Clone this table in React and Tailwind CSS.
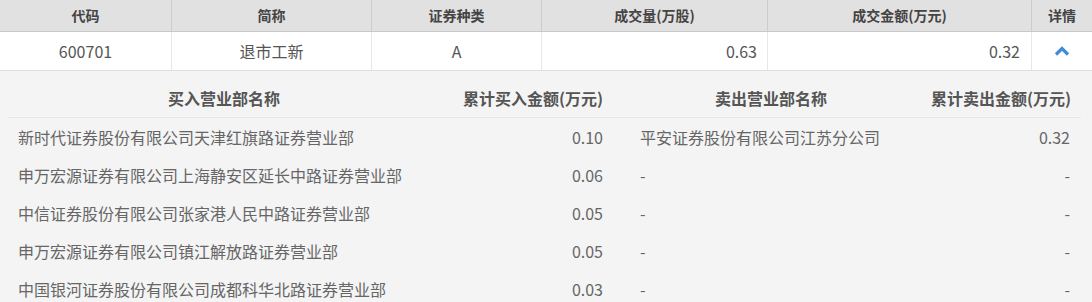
import React from 'react';

const COLS = [
    { key: 'code', label: '代码', w: 'w-[172px]' },
    { key: 'name', label: '简称', w: 'w-[200px]' },
    { key: 'type', label: '证券种类', w: 'w-[170px]' },
    { key: 'vol', label: '成交量(万股)', w: 'w-[226px]' },
    { key: 'amt', label: '成交金额(万元)', w: 'w-[264px]' },
    { key: 'detail', label: '详情', w: 'w-[60px]' },
];

const ROWS = [
    { buy: '新时代证券股份有限公司天津红旗路证券营业部', buyAmt: '0.10', sell: '平安证券股份有限公司江苏分公司', sellAmt: '0.32' },
    { buy: '申万宏源证券有限公司上海静安区延长中路证券营业部', buyAmt: '0.06', sell: '-', sellAmt: '-' },
    { buy: '中信证券股份有限公司张家港人民中路证券营业部', buyAmt: '0.05', sell: '-', sellAmt: '-' },
    { buy: '申万宏源证券有限公司镇江解放路证券营业部', buyAmt: '0.05', sell: '-', sellAmt: '-' },
    { buy: '中国银河证券股份有限公司成都科华北路证券营业部', buyAmt: '0.03', sell: '-', sellAmt: '-' },
];

function ChevronUp() {
    return (
        <svg width="16" height="10" viewBox="0 0 16 10" className="inline-block">
            <polyline points="2,8.5 8,2.5 14,8.5" fill="none" stroke="#3f8bd6" strokeWidth="3.2" strokeLinejoin="miter" />
        </svg>
    );
}

export default function App() {
    return (
        <div className="w-[1092px] h-[302px] overflow-hidden bg-white font-['Noto_Sans_CJK_SC',sans-serif]">
            {/* top summary table */}
            <div className="flex h-[32px] bg-[#e1e1e1] border-b border-[#c9c9c9] text-[14px] font-bold text-[#444]">
                {COLS.map((c, i) => (
                    <div
                        key={c.key}
                        className={`${c.w} shrink-0 flex items-center justify-center whitespace-nowrap ${i < COLS.length - 1 ? 'border-r border-[#cbcbcb]' : ''}`}
                    >
                        {c.label}
                    </div>
                ))}
            </div>
            <div className="flex h-[39px] border-b border-[#dedede] text-[16px] text-[#555]">
                <div className="w-[172px] shrink-0 flex items-center justify-center border-r border-[#e8e8e8]">600701</div>
                <div className="w-[200px] shrink-0 flex items-center justify-center border-r border-[#e8e8e8]">退市工新</div>
                <div className="w-[170px] shrink-0 flex items-center justify-center border-r border-[#e8e8e8]">A</div>
                <div className="w-[226px] shrink-0 flex items-center justify-end pr-[10px] border-r border-[#e8e8e8]">0.63</div>
                <div className="w-[264px] shrink-0 flex items-center justify-end pr-[11px] border-r border-[#e8e8e8]">0.32</div>
                <div className="w-[60px] shrink-0 flex items-center justify-center">
                    <ChevronUp />
                </div>
            </div>

            {/* expanded detail */}
            <div className="bg-[#f4f4f4] pt-2 pl-2 pr-[11px] h-[240px]">
                <div className="flex h-[39px] border-b border-[#e6e6e6] text-[16px] font-bold text-[#555] whitespace-nowrap">
                    <div className="w-[432px] shrink-0 flex items-center justify-center">买入营业部名称</div>
                    <div className="w-[173px] shrink-0 flex items-center justify-end pr-[10px]">累计买入金额(万元)</div>
                    <div className="w-[316px] shrink-0 flex items-center justify-center">卖出营业部名称</div>
                    <div className="flex-1 flex items-center justify-end pr-[10px]">累计卖出金额(万元)</div>
                </div>
                {ROWS.map((r, i) => (
                    <div key={i} className="flex h-[38px] text-[16px] text-[#666]">
                        <div className="w-[432px] shrink-0 flex items-center pl-[10px] whitespace-nowrap">{r.buy}</div>
                        <div className="w-[173px] shrink-0 flex items-center justify-end pr-[10px]">{r.buyAmt}</div>
                        <div className="w-[316px] shrink-0 flex items-center pl-[27px] whitespace-nowrap">{r.sell}</div>
                        <div className="flex-1 flex items-center justify-end pr-[11px]">{r.sellAmt}</div>
                    </div>
                ))}
            </div>
        </div>
    );
}
